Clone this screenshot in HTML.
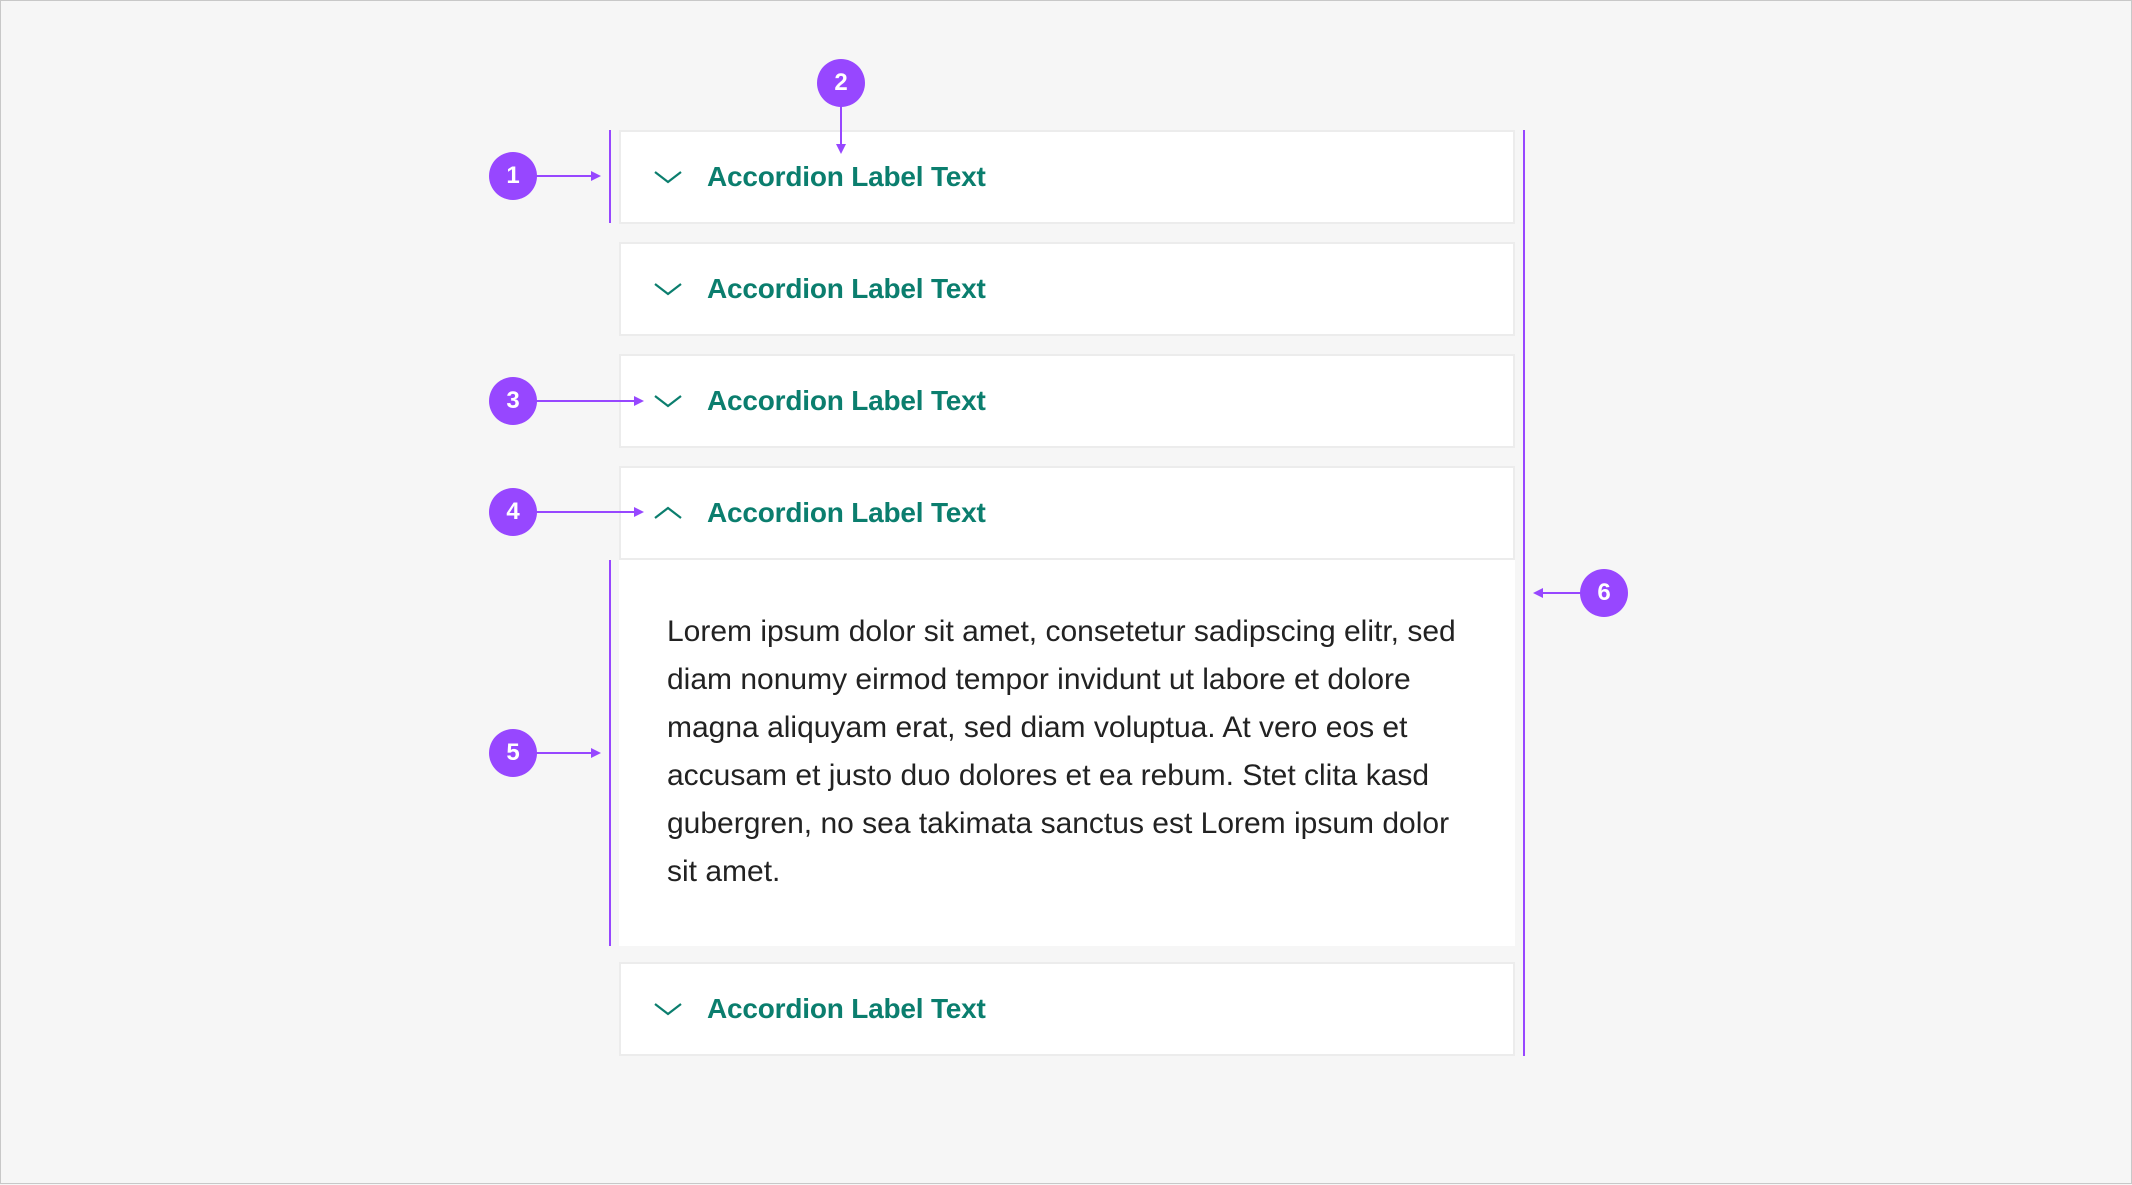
<!DOCTYPE html>
<html><head><meta charset="utf-8"><style>
*{margin:0;padding:0;box-sizing:border-box}
body{width:2132px;height:1184px;background:#f6f6f6;position:relative;overflow:hidden;font-family:"Liberation Sans",sans-serif;border:1px solid #c8c8c8}
.h{position:absolute;left:618px;width:896px;height:94px;background:#fff;border:2px solid #ececec;display:flex;align-items:center}
.h svg{position:absolute;left:33px;top:50%;margin-top:-7px}
.h span{position:absolute;left:86px;font-size:28px;font-weight:bold;color:#0b7e6e;letter-spacing:-0.2px}
.c{position:absolute;left:618px;top:559px;width:896px;height:386px;background:#fff}
.c p{position:absolute;left:48px;top:48px;font-size:30px;line-height:48px;color:#222;white-space:nowrap}
.v{position:absolute;background:#9747ff;width:2px}
.b{position:absolute;width:48px;height:48px;border-radius:50%;background:#9747ff;color:#fff;font-weight:bold;font-size:24px;display:flex;align-items:center;justify-content:center}
svg.a{position:absolute;left:0;top:0}
</style></head><body>
<div class="h" style="top:129px"><svg width="28" height="14" viewBox="0 0 28 14"><path d="M1 2 L14 12 L27 2" fill="none" stroke="#0b7e6e" stroke-width="2.2"/></svg><span>Accordion Label Text</span></div>
<div class="h" style="top:241px"><svg width="28" height="14" viewBox="0 0 28 14"><path d="M1 2 L14 12 L27 2" fill="none" stroke="#0b7e6e" stroke-width="2.2"/></svg><span>Accordion Label Text</span></div>
<div class="h" style="top:353px"><svg width="28" height="14" viewBox="0 0 28 14"><path d="M1 2 L14 12 L27 2" fill="none" stroke="#0b7e6e" stroke-width="2.2"/></svg><span>Accordion Label Text</span></div>
<div class="h" style="top:465px"><svg width="28" height="14" viewBox="0 0 28 14"><path d="M1 12 L14 2 L27 12" fill="none" stroke="#0b7e6e" stroke-width="2.2"/></svg><span>Accordion Label Text</span></div>
<div class="c"><p>Lorem ipsum dolor sit amet, consetetur sadipscing elitr, sed<br>diam nonumy eirmod tempor invidunt ut labore et dolore<br>magna aliquyam erat, sed diam voluptua. At vero eos et<br>accusam et justo duo dolores et ea rebum. Stet clita kasd<br>gubergren, no sea takimata sanctus est Lorem ipsum dolor<br>sit amet.</p></div>
<div class="h" style="top:961px"><svg width="28" height="14" viewBox="0 0 28 14"><path d="M1 2 L14 12 L27 2" fill="none" stroke="#0b7e6e" stroke-width="2.2"/></svg><span>Accordion Label Text</span></div>

<div class="v" style="left:608px;top:129px;height:93px"></div>
<div class="v" style="left:608px;top:559px;height:386px"></div>
<div class="v" style="left:1522px;top:129px;height:926px"></div>

<svg class="a" width="2132" height="1184">
<g stroke="#9747ff" stroke-width="2" fill="#9747ff">
<line x1="534" y1="175" x2="592" y2="175"/><path d="M600 175 L590 170 L590 180Z" stroke="none"/>
<line x1="840" y1="104" x2="840" y2="145"/><path d="M840 153 L835 143 L845 143Z" stroke="none"/>
<line x1="534" y1="400" x2="635" y2="400"/><path d="M643 400 L633 395 L633 405Z" stroke="none"/>
<line x1="534" y1="511" x2="635" y2="511"/><path d="M643 511 L633 506 L633 516Z" stroke="none"/>
<line x1="534" y1="752" x2="592" y2="752"/><path d="M600 752 L590 747 L590 757Z" stroke="none"/>
<line x1="1580" y1="592" x2="1540" y2="592"/><path d="M1532 592 L1542 587 L1542 597Z" stroke="none"/>
</g></svg>
<div class="b" style="left:488px;top:151px">1</div>
<div class="b" style="left:816px;top:58px">2</div>
<div class="b" style="left:488px;top:376px">3</div>
<div class="b" style="left:488px;top:487px">4</div>
<div class="b" style="left:488px;top:728px">5</div>
<div class="b" style="left:1579px;top:568px">6</div>
</body></html>
